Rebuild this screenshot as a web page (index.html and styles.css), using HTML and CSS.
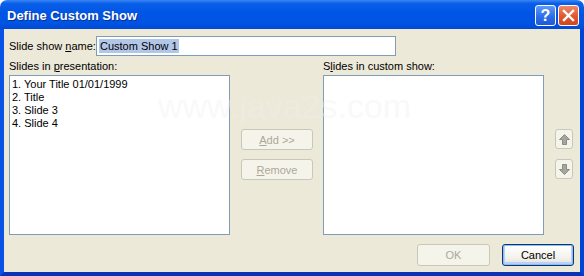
FILE: index.html
```html
<!DOCTYPE html>
<html lang="en">
<head>
  <meta charset="UTF-8">
  <title>Define Custom Show</title>
  <link rel="stylesheet" href="styles.css">
</head>
<body>

<div class="window">
  <div class="titlebar">
    <span class="title">Define Custom Show</span>
    <div class="caption-buttons">
      <span class="cap help">?</span>
      <span class="cap close">
        <svg width="13" height="13" viewBox="0 0 13 13"><path d="M2 2 L11 11 M11 2 L2 11" stroke="#fff" stroke-width="2.4" stroke-linecap="square"/></svg>
      </span>
    </div>
  </div>

  <div class="client">
    <!-- name of the show -->
    <div class="name-row">
      <label class="name-label">Slide show <u>n</u>ame:</label>
      <div class="textbox"><span class="sel">Custom Show 1</span></div>
    </div>

    <div class="lists">
      <div class="col">
        <label class="caption">Slides in <u>p</u>resentation:</label>
        <div class="listbox">
          <div>1. Your Title 01/01/1999</div>
          <div>2. Title</div>
          <div>3. Slide 3</div>
          <div>4. Slide 4</div>
        </div>
      </div>

      <div class="mid">
        <button class="btn wide" disabled><u>A</u>dd &gt;&gt;</button>
        <button class="btn wide" disabled><u>R</u>emove</button>
      </div>

      <div class="col right">
        <label class="caption">S<u>l</u>ides in custom show:</label>
        <div class="listbox"></div>
      </div>

      <div class="arrows">
        <button class="btn arrow" disabled>
          <svg width="11" height="11" viewBox="0 0 11 11"><path d="M5.5 0.5 L10.5 5.5 L7.5 5.5 L7.5 10.5 L3.5 10.5 L3.5 5.5 L0.5 5.5 Z" fill="#a7a69e" stroke="#8c8b84" stroke-width="1" stroke-linejoin="miter"/></svg>
        </button>
        <button class="btn arrow" disabled>
          <svg width="11" height="11" viewBox="0 0 11 11"><path d="M5.5 10.5 L10.5 5.5 L7.5 5.5 L7.5 0.5 L3.5 0.5 L3.5 5.5 L0.5 5.5 Z" fill="#a7a69e" stroke="#8c8b84" stroke-width="1" stroke-linejoin="miter"/></svg>
        </button>
      </div>
    </div>

    <div class="footer">
      <button class="btn ok" disabled>OK</button>
      <button class="btn cancel">Cancel</button>
    </div>

    <div class="watermark">www.java2s.com</div>
  </div>
</div>

</body>
</html>
```

FILE: styles.css
```css
body {
  margin: 0;
  background: #fff;
  font-family: "Liberation Sans", Arial, sans-serif;
  font-size: 11px;
  color: #000;
}
.window {
  width: 584px;
  height: 276px;
  display: flex;
  flex-direction: column;
}
.titlebar {
  height: 29px;
  display: flex;
  align-items: center;
  justify-content: space-between;
  padding: 0 5px 0 7px;
  border-radius: 7px 7px 0 0;
  background: linear-gradient(to bottom, #3b86f4 0%, #0a5fe9 12%, #0055e5 45%, #0054e3 80%, #0149d4 100%);
}
.title {
  color: #fff;
  font-weight: bold;
  font-size: 13px;
  padding-top: 2px;
  text-shadow: 1px 1px 0 #0b2f8c;
}
.caption-buttons {
  display: flex;
  gap: 2px;
  padding-top: 2px;
}
.cap {
  width: 19px;
  height: 19px;
  border: 1px solid #fff;
  border-radius: 3px;
  display: flex;
  align-items: center;
  justify-content: center;
  color: #fff;
}
.help {
  background: linear-gradient(to bottom, #5f9bf7, #2b6ae8 60%, #1f5bd8);
  font-weight: bold;
  font-size: 16px;
}
.close {
  background: linear-gradient(to bottom, #ee8a6a, #e3562d 55%, #d0451f);
}
.client {
  position: relative;
  flex: 1;
  background: #ece9d8;
  border-left: 4px solid #0853e6;
  border-right: 4px solid #0044d8;
  border-bottom: 4px solid #0a33b8;
  padding: 7px 0 0 5px;
}
.name-row {
  display: flex;
  align-items: center;
}
.name-label {
  width: 87px;
}
.textbox {
  width: 296px;
  height: 18px;
  border: 1px solid #7f9db9;
  background: #fff;
  display: flex;
  align-items: center;
  padding-left: 2px;
}
.sel {
  background: #b2c6e8;
  line-height: 14px;
  padding: 0 1px;
}
.lists {
  display: flex;
}
.caption {
  display: block;
  line-height: 13px;
  margin: 4px 0 2px;
}
.listbox {
  width: 217px;
  height: 156px;
  border: 1px solid #7f9db9;
  background: #fff;
  padding: 2px 0 0 2px;
  line-height: 13px;
}
.right {
  margin-left: 10px;
}
.mid {
  margin-left: 11px;
  padding-top: 73px;
  display: flex;
  flex-direction: column;
  gap: 9px;
}
.arrows {
  margin-left: 11px;
  padding-top: 73px;
  display: flex;
  flex-direction: column;
  gap: 10px;
}
.btn {
  font-family: "Liberation Sans", Arial, sans-serif;
  font-size: 11px;
  border: 1px solid #003c74;
  border-radius: 3px;
  background: linear-gradient(to bottom, #fff 0%, #f4f3ee 60%, #e3e1d6 100%);
  color: #000;
  padding: 0;
  margin: 0;
}
.btn:disabled {
  border-color: #c9c7ba;
  background: #f5f4ea;
  color: #aca899;
}
.wide {
  width: 72px;
  height: 21px;
}
.arrow {
  width: 18px;
  height: 20px;
  display: flex;
  align-items: center;
  justify-content: center;
}
.footer {
  display: flex;
  justify-content: flex-end;
  gap: 12px;
  margin-top: 9px;
  padding-right: 6px;
}
.ok {
  width: 73px;
  height: 22px;
}
.cancel {
  width: 72px;
  height: 22px;
  box-shadow: inset 0 0 0 1px #98b8f4, inset 0 -1px 0 2px #b9d1fa;
}
.watermark {
  position: absolute;
  left: 154px;
  top: 58px;
  font-size: 34px;
  color: rgba(240, 240, 238, 0.4);
  pointer-events: none;
}
```
